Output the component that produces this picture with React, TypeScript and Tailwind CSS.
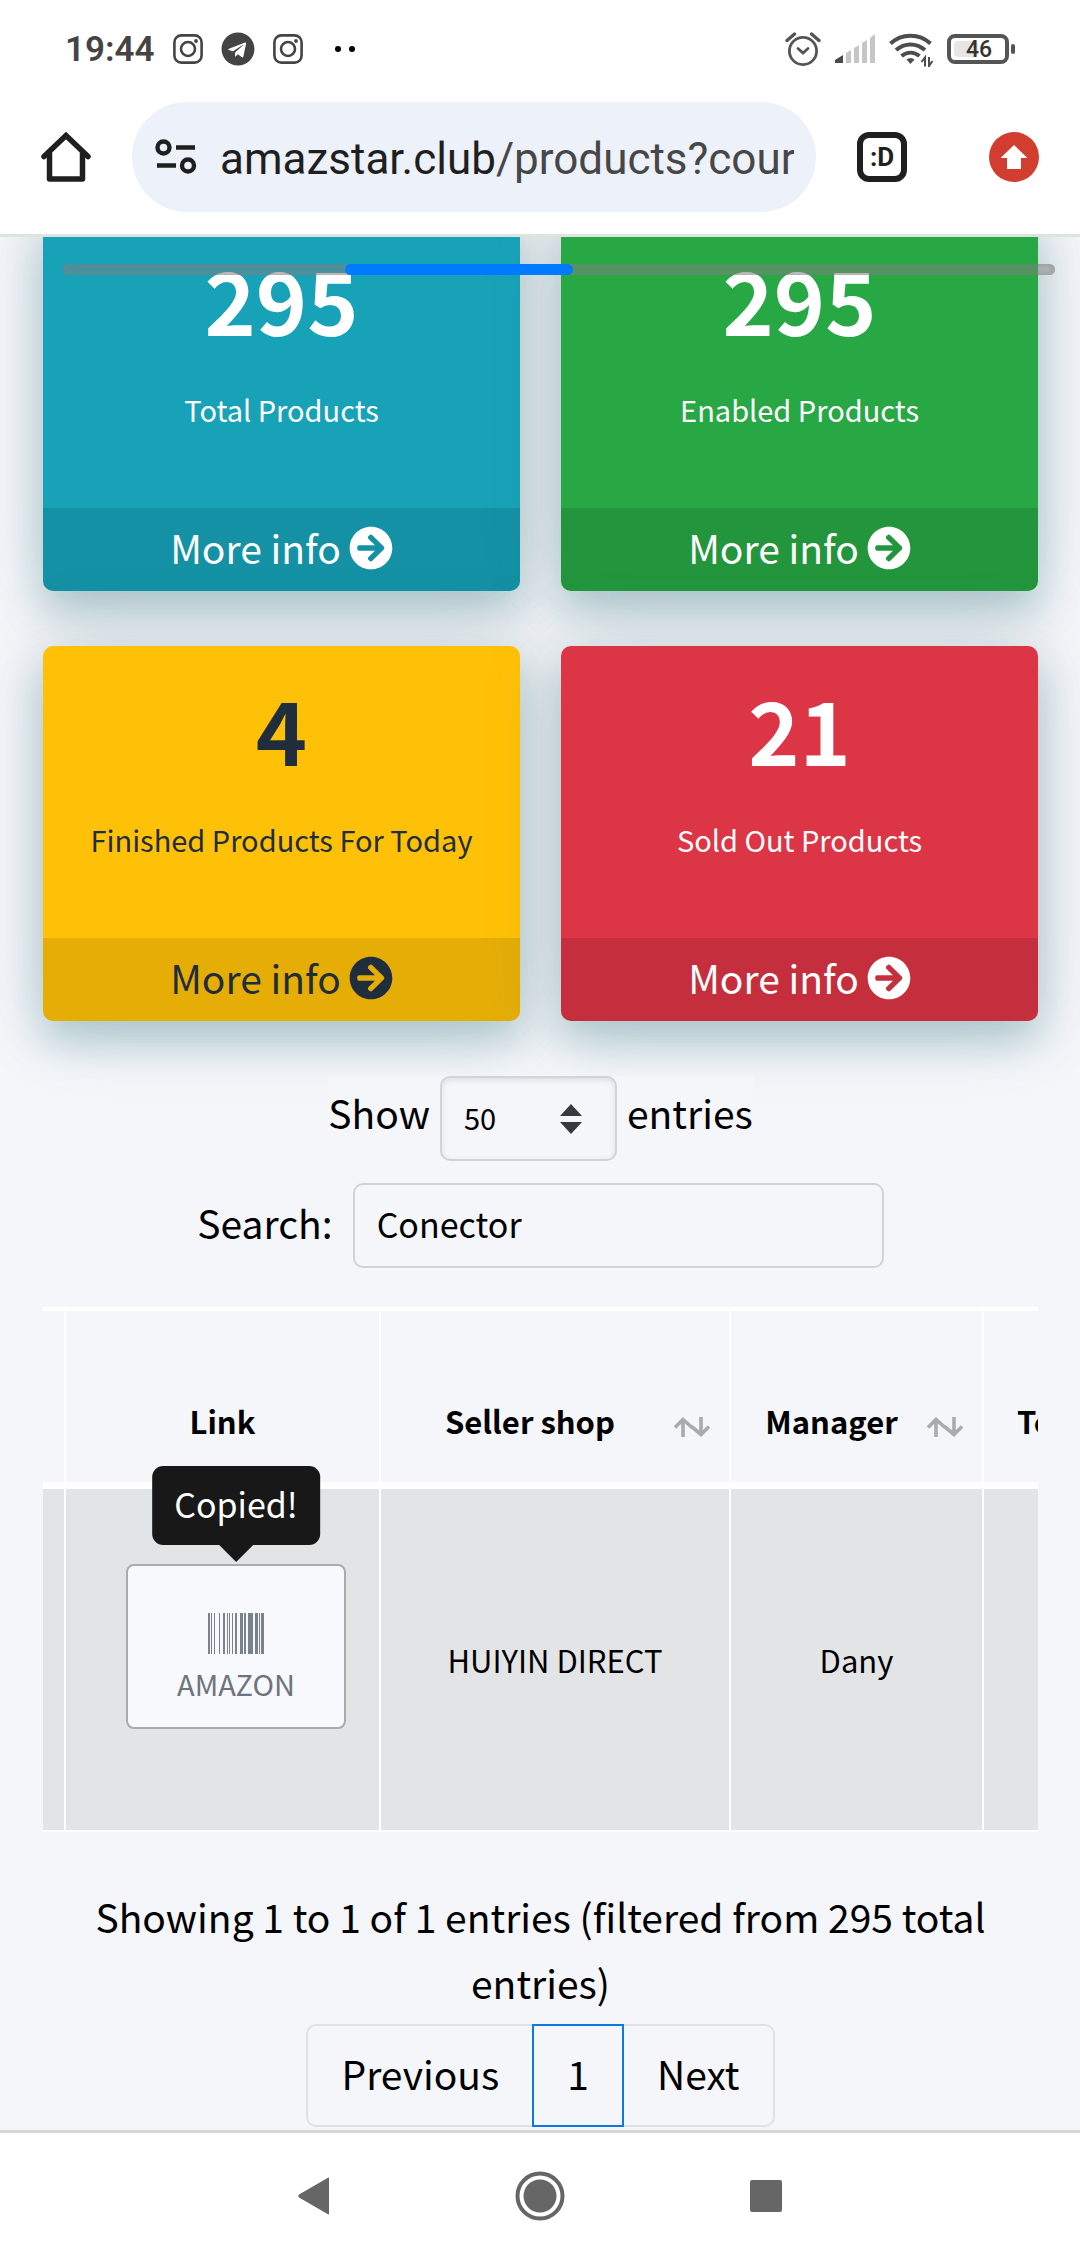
import type { ReactNode } from 'react';
import { FaArrowCircleRight, FaTelegram } from 'react-icons/fa';

function InstagramIcon() {
  return (
    <svg width="30" height="30" viewBox="0 0 30 30" fill="none" stroke="#444" strokeWidth="2.6">
      <rect x="1.4" y="1.4" width="27.2" height="27.2" rx="7" />
      <circle cx="15" cy="15" r="7" />
      <circle cx="23" cy="7" r="1.9" fill="#444" stroke="none" />
    </svg>
  );
}

function AlarmIcon() {
  return (
    <svg width="36" height="36" viewBox="0 0 36 36" fill="none" stroke="#555" strokeWidth="2.8" strokeLinecap="round">
      <circle cx="18" cy="20" r="13.6" />
      <path d="M13 17.5l5 4.6 5-4.6" />
      <path d="M2 9.5L9.5 3M34 9.5L26.5 3" strokeWidth="3.4" />
    </svg>
  );
}

function SignalIcon() {
  return (
    <svg width="40" height="30" viewBox="0 0 40 30" fill="#c6c6c6">
      <path d="M0 29v-3l8-5v8z" fill="#4a4a4a" />
      <path d="M11 29V19l5-3v13zM19 29V14l5-3v18zM27 29V9l5-3v23zM35 29V4l5-4v29z" />
    </svg>
  );
}

function WifiIcon() {
  return (
    <svg width="44" height="36" viewBox="0 0 44 36" fill="none" stroke="#4d4d4d" strokeWidth="4">
      <path d="M1.5 12.5c11-10.5 29-10.5 40 0" />
      <path d="M7 19c8.5-7.5 20.5-7.5 29 0" />
      <path d="M12.5 25c5.5-4.5 12.5-4.5 18 0" />
      <path d="M17.5 28.5c2.5-2 5.5-2 8 0l-4 4.5z" fill="#4d4d4d" stroke="none" />
      <path d="M36 35.5v-9l-3.5 4.5M40 26v9l3.5-5" strokeWidth="2" />
    </svg>
  );
}

function BatteryIcon() {
  return (
    <div className="flex items-center gap-0.5">
      <div className="flex h-[30px] w-[62px] items-center rounded-lg border-4 border-[#555] p-[3px]">
        <div className="flex h-4 w-[24px] items-center rounded-sm bg-[#e6e6e6] pt-0.5 pl-[12px]">
          <span className="text-[23px] leading-4 font-medium text-[#333]">46</span>
        </div>
      </div>
      <div className="h-[10px] w-1 rounded-sm bg-[#555]" />
    </div>
  );
}

function StatusBar() {
  return (
    <div className="flex h-[98px] items-center justify-between pr-[65px] pl-[65px]">
      <div className="flex items-center">
        <span className="pt-0.5 text-[35px] leading-10 font-semibold text-[#444]">19:44</span>
        <div className="ml-[18px] flex items-center gap-[18px]">
          <InstagramIcon />
          <FaTelegram size={34} color="#444" />
          <InstagramIcon />
        </div>
        <svg className="ml-8" width="20" height="6" viewBox="0 0 20 6">
          <circle cx="3" cy="3" r="3" />
          <circle cx="17" cy="3" r="3" />
        </svg>
      </div>
      <div className="flex items-center gap-[14px]">
        <AlarmIcon />
        <SignalIcon />
        <WifiIcon />
        <BatteryIcon />
      </div>
    </div>
  );
}

function AddressBar() {
  return (
    <div className="flex items-center pt-1 pr-[41px] pb-[22px] pl-[41px]">
      <button aria-label="Home">
        <svg width="50" height="50" viewBox="0 0 50 50" fill="none" stroke="#1f1f1f" strokeWidth="5.5" strokeLinecap="round" strokeLinejoin="round">
          <path d="M3 24.5l22-21 22 21" strokeLinejoin="miter" />
          <path d="M8.5 21v26h33V21" />
        </svg>
      </button>
      <div className="ml-[41px] flex h-[110px] min-w-0 flex-1 items-center rounded-full bg-[#ecf1fa] pr-[22px] pl-[23px]">
        <button aria-label="Site settings">
          <svg width="42" height="36" viewBox="0 0 42 36" fill="none" stroke="#1f1f1f" strokeWidth="4.4">
            <circle cx="8.5" cy="8.5" r="6" />
            <path d="M21 8.5h19M2 26.5h19" />
            <circle cx="33" cy="26.5" r="6" />
          </svg>
        </button>
        <div className="ml-[23px] flex-1 overflow-hidden pt-1 text-[44px] leading-[60px] whitespace-nowrap text-[#474747]">
          <span className="text-[#1f1f1f]">amazstar.club</span>/products?cour
        </div>
      </div>
      <button className="ml-[41px] flex size-[50px] items-center justify-center rounded-xl border-[6px] border-[#1f1f1f] text-[26px] leading-6 font-bold text-[#1f1f1f]">
        :D
      </button>
      <button aria-label="Update" className="ml-[82px]">
        <svg width="50" height="50" viewBox="0 0 50 50">
          <circle cx="25" cy="25" r="25" fill="#d13e2f" />
          <path d="M25 13L11.5 26H18v11h14V26h6.5z" fill="#fff" />
        </svg>
      </button>
    </div>
  );
}

interface StatCardProps {
  value: number;
  label: string;
  className: string;
}

function StatCard({ value, label, className }: StatCardProps) {
  return (
    <div
      className={`overflow-hidden rounded-[10px] text-center shadow-[0_0_80px_rgba(80,110,110,0.2),0_20px_40px_rgba(0,95,105,0.25)] ${className}`}
    >
      <div className="h-[292px] pt-[37px]">
        <h3 className="text-[87px] leading-[90px] font-bold">{value}</h3>
        <p className="pt-[36px] text-[29px] leading-[60px]">{label}</p>
      </div>
      <a href="#" className="flex h-[83px] items-center justify-center gap-2 bg-black/10 pb-1 text-[39px] leading-[60px]">
        <span className="pb-0.5">More info</span>
        <FaArrowCircleRight size={44} />
      </a>
    </div>
  );
}

function SortIcon() {
  return (
    <svg className="absolute right-[19px] bottom-[45px]" width="36" height="20" viewBox="0 0 36 20" fill="none" stroke="#a9abad" strokeWidth="3.6">
      <path d="M9 20V3M1 10.5l8-8 9 8M27 0v17M17.5 9.5l9.5 8 8-8" />
    </svg>
  );
}

function HeaderCell({ children }: { children: ReactNode }) {
  return (
    <th className="relative border-r-2 border-white pr-[83px] pb-[38px] pl-[33px] align-bottom">
      {children}
      <SortIcon />
    </th>
  );
}

// [x, width] of every bar
const bars = [
  [0, 2], [3, 1], [6, 1], [11, 1], [15, 2], [19, 1], [21, 1], [24, 1], [27, 2],
  [32, 3], [36, 2], [40, 5], [47, 3], [51, 1], [53, 3],
];

function ProductsTable() {
  return (
    <div className="mt-[39px] overflow-hidden">
      <table className="w-[1200px] table-fixed border-separate border-spacing-0 border-t-4 border-white leading-[46px]">
        <colgroup>
          <col className="w-[23px]" />
          <col className="w-[315px]" />
          <col className="w-[350px]" />
          <col className="w-[253px]" />
          <col />
        </colgroup>
        <thead>
          <tr className="h-[171px] text-[31px] font-bold">
            <th className="border-r-2 border-white" />
            <th className="border-r-2 border-white pb-[38px] align-bottom">Link</th>
            <HeaderCell>Seller shop</HeaderCell>
            <HeaderCell>Manager</HeaderCell>
            <th className="pb-[38px] pl-[33px] text-left align-bottom">Total</th>
          </tr>
        </thead>
        <tbody>
          <tr className="h-[350px] bg-[#e3e4e6] text-center text-[31px]">
            <td className="border-t-7 border-r-2 border-b-2 border-white" />
            <td className="border-t-7 border-r-2 border-b-2 border-white pt-[75px] pl-[60px] align-top">
              <button className="relative flex h-[165px] w-[220px] flex-col items-center rounded-lg border-2 border-[#a9abad] bg-[#f8f9fc] pt-[47px] text-[29px] leading-[58px] text-[#6c757d]">
                <svg width="56" height="41" viewBox="0 0 56 41" fill="#7a828a">
                  {bars.map(([x, w]) => (
                    <rect key={x} x={x} width={w} height="41" />
                  ))}
                </svg>
                AMAZON
                <span
                  role="tooltip"
                  className="absolute bottom-[182px] left-1/2 -translate-x-1/2 rounded-[11px] bg-[#181818] px-[22px] pt-[15px] pb-[18px] text-[34px] leading-[46px] text-white"
                >
                  Copied!
                  <svg className="absolute top-full left-1/2 -translate-x-1/2" width="34" height="17" viewBox="0 0 34 17" fill="#181818">
                    <path d="M0 0h34L17 17z" />
                  </svg>
                </span>
              </button>
            </td>
            <td className="border-t-7 border-r-2 border-b-2 border-white">HUIYIN DIRECT</td>
            <td className="border-t-7 border-r-2 border-b-2 border-white">Dany</td>
            <td className="border-t-7 border-b-2 border-white" />
          </tr>
        </tbody>
      </table>
    </div>
  );
}

export default function App() {
  return (
    <div className="flex min-h-screen flex-col bg-[#f4f6fa] font-['Roboto',sans-serif]">
      <header className="border-b-3 border-[#dfe3e0] bg-white">
        <StatusBar />
        <AddressBar />
      </header>

      <main className="relative flex-1 overflow-hidden pr-[42px] pl-[43px] font-['Noto_Sans_CJK_SC',sans-serif] text-black">
        {/* Horizontal scroll indicator, floats over the cards */}
        <div className="absolute top-[27px] right-[25px] left-[63px] h-[11px] rounded-full bg-[#808080]/40 shadow-[inset_0_0_8px_rgba(128,128,128,0.7)]">
          <div className="ml-[282px] h-full w-[228px] rounded-full bg-[#007bff]" />
        </div>

        <div className="-mt-[21px] grid grid-cols-2 gap-x-[41px] gap-y-[55px]">
          <StatCard value={295} label="Total Products" className="bg-[#17a2b8] text-white" />
          <StatCard value={295} label="Enabled Products" className="bg-[#28a745] text-white" />
          <StatCard value={4} label="Finished Products For Today" className="bg-[#ffc107] text-[#1f2d3d]" />
          <StatCard value={21} label="Sold Out Products" className="bg-[#dc3545] text-white" />
        </div>

        <div className="mt-[55px] flex justify-center">
          <label className="flex items-start gap-[10px] bg-[#f4f6fa] text-[39px] leading-[72px]">
            Show
            <span className="relative">
              <select
                defaultValue="50"
                className="block h-[85px] w-[177px] appearance-none rounded-[10px] border-2 border-[#ced4da] bg-transparent pb-1 pl-[22px] text-[29px] shadow-[inset_0_2px_6px_rgba(0,0,0,0.1)]"
              >
                <option>10</option>
                <option>25</option>
                <option>50</option>
                <option>100</option>
              </select>
              <svg className="pointer-events-none absolute top-[28px] right-[35px]" width="22" height="30" viewBox="0 0 22 30" fill="#343a40">
                <path d="M0 12L11 0l11 12zM0 18l11 12 11-12z" />
              </svg>
            </span>
            entries
          </label>
        </div>

        <div className="mt-[22px] flex justify-center">
          <label className="flex gap-[20px] text-[39px] leading-[78px]">
            Search:
            <input
              type="text"
              defaultValue="Conector"
              className="h-[85px] w-[531px] rounded-[10px] border-2 border-[#ced4da] bg-transparent px-[22px] pb-1 text-[34px]"
            />
          </label>
        </div>

        <ProductsTable />

        <p className="mt-[51px] text-center text-[39px] leading-[66px]">
          Showing 1 to 1 of 1 entries (filtered from 295 total entries)
        </p>

        <nav className="mt-[9px] mb-[2px] flex h-[103px] justify-center text-[39px]">
          <button className="rounded-l-[10px] border-2 border-r-0 border-[#dee2e6] px-[33px] pb-1">Previous</button>
          <button className="border-2 border-[#0b78e3] px-[33px] pb-1">1</button>
          <button className="rounded-r-[10px] border-2 border-l-0 border-[#dee2e6] px-[33px] pb-1">Next</button>
        </nav>
      </main>

      <footer className="grid h-[130px] grid-cols-3 items-center justify-items-center border-t-3 border-[#d5d8d7] bg-white px-[201px] pb-0.5">
        <button aria-label="Back">
          <svg width="32" height="38" viewBox="0 0 32 38" fill="#666">
            <path d="M31 1.5v35q0 1.5-1.5.5L1 20.5q-1.5-1.5 0-3L29.5 1q1.5-1 1.5.5z" />
          </svg>
        </button>
        <button aria-label="Home screen">
          <svg width="50" height="50" viewBox="0 0 50 50" fill="#666">
            <circle cx="25" cy="25" r="22.5" fill="none" stroke="#666" strokeWidth="4" />
            <circle cx="25" cy="25" r="16.5" />
          </svg>
        </button>
        <button aria-label="Recent apps">
          <svg width="32" height="32" viewBox="0 0 32 32" fill="#666">
            <rect width="32" height="32" rx="2" />
          </svg>
        </button>
      </footer>
    </div>
  );
}
